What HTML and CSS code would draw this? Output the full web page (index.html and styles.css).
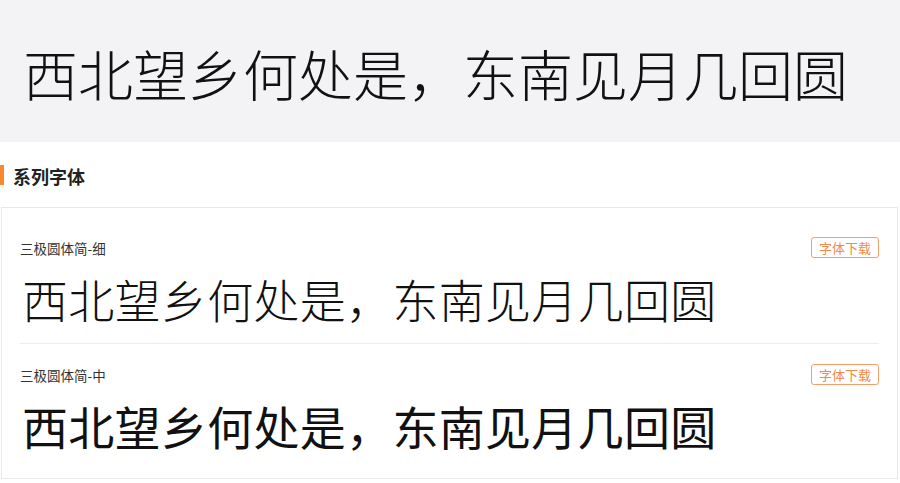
FILE: index.html
```html
<!DOCTYPE html>
<html lang="zh-CN">
<head>
<meta charset="utf-8">
<title>三极圆体简</title>
<link rel="stylesheet" href="styles.css">
</head>
<body>
<div class="hero">
  <p class="hero-text">西北望乡何处是，东南见月几回圆</p>
</div>
<h2 class="section-title">系列字体</h2>
<div class="card">
  <div class="font-row">
    <div class="row-head">
      <span class="font-name">三极圆体简-细</span>
      <a class="download" href="#">字体下载</a>
    </div>
    <p class="sample sample-thin">西北望乡何处是，东南见月几回圆</p>
  </div>
  <div class="font-row">
    <div class="row-head">
      <span class="font-name">三极圆体简-中</span>
      <a class="download" href="#">字体下载</a>
    </div>
    <p class="sample sample-medium">西北望乡何处是，东南见月几回圆</p>
  </div>
</div>
</body>
</html>
```

FILE: styles.css
```css
* {
  box-sizing: border-box;
}

html, body {
  margin: 0;
  padding: 0;
  background: #ffffff;
  font-family: "Noto Sans CJK SC", "Noto Sans", sans-serif;
  color: #222;
  overflow: hidden;
}

.hero {
  height: 142px;
  background: #f3f3f5;
  display: flex;
  align-items: center;
  padding: 0 0 0 23px;
}

.hero-text {
  margin: 0;
  font-size: 55px;
  line-height: 60px;
  font-weight: 300;
  color: #111;
  white-space: nowrap;
  position: relative;
  top: 1px;
}

.section-title {
  position: relative;
  margin: 24px 0 21px;
  padding-left: 13px;
  font-size: 18px;
  line-height: 20px;
  font-weight: 700;
  color: #222;
}

.section-title::before {
  content: "";
  position: absolute;
  left: 0;
  top: -1px;
  width: 4px;
  height: 20px;
  background: #f7892c;
}

.card {
  margin-left: 1px;
  width: 897px;
  border: 1px solid #e8e8e8;
  padding: 0 18px;
}

.font-row {
  padding: 29px 0 17px;
  border-bottom: 1px solid #ececec;
}

.font-row + .font-row {
  padding-top: 20px;
  padding-bottom: 25px;
  border-bottom: none;
}

.row-head {
  display: flex;
  align-items: center;
  justify-content: space-between;
  height: 21px;
}

.font-name {
  font-size: 13.5px;
  color: #333;
}

.download {
  display: inline-flex;
  align-items: center;
  justify-content: center;
  width: 68px;
  height: 21px;
  border: 1px solid #f3a06a;
  border-radius: 3px;
  font-size: 13px;
  color: #ef8a4a;
  text-decoration: none;
}

.sample {
  margin: 12px 0 0;
  padding-left: 2px;
  font-size: 46px;
  line-height: 56px;
  color: #111;
  white-space: nowrap;
}

.sample-thin {
  font-weight: 300;
  letter-spacing: 0.3px;
}

.sample-medium {
  font-weight: 400;
  letter-spacing: 0.3px;
}
```
